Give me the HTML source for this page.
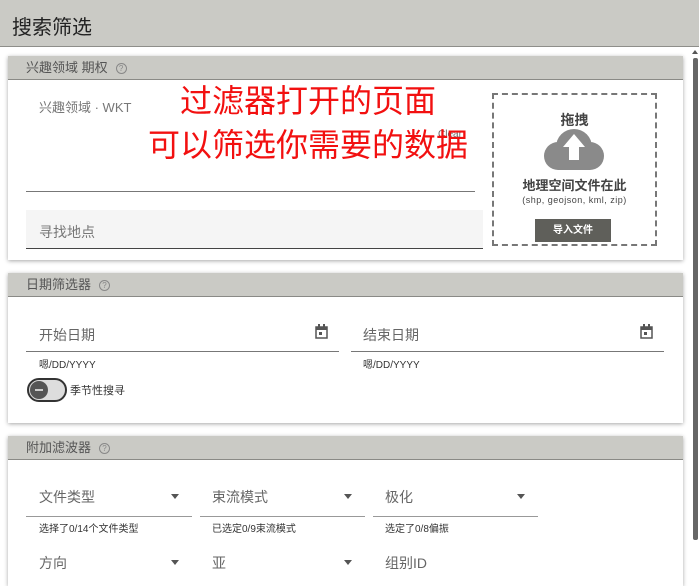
<!DOCTYPE html><html><head><meta charset="utf-8"><style>
body{margin:0;width:699px;height:578px;overflow:hidden;background:#fff;font-family:"Liberation Sans","Noto Sans CJK SC",sans-serif;position:relative}
.a{position:absolute}
.hd{background:#cacac5;border-bottom:1px solid #8e8e8a}
.card{position:absolute;left:8px;width:675px;background:#fff;box-shadow:0 1px 4px rgba(0,0,0,.35)}
.ch{height:23px;background:#cacac5;border-bottom:1px solid #8a8a86;font-size:13px;color:#555;line-height:23px;padding-left:18px}
.q{display:inline-block;width:9px;height:9px;border:1px solid #888;border-radius:50%;font-size:8px;line-height:9px;text-align:center;margin-left:8px;vertical-align:1px;color:#888}
.lbl{font-size:14px;color:#666}
.ln{height:1px;background:#777}
.sm{font-size:10px;color:#333}
.tri{width:0;height:0;border-left:4px solid transparent;border-right:4px solid transparent;border-top:5px solid #555}
.red{color:#f21010;font-size:32px;position:absolute}
</style></head><body>
<div class="a hd" style="left:0;top:0;width:699px;height:46px"></div>
<div class="a" style="left:12px;top:11px;font-size:20px;color:#222">搜索筛选</div>
<div class="a" style="left:693px;top:58px;width:5px;height:482px;background:#666;border-radius:2px"></div>
<div class="a" style="left:692px;top:50px;width:0;height:0;border-left:3px solid transparent;border-right:3px solid transparent;border-bottom:4px solid #555"></div>

<div class="card" style="top:56px;height:204px">
<div class="ch">兴趣领域 期权<span class="q">?</span></div>
<div class="a lbl" style="left:31px;top:41px;font-size:13px;color:#777">兴趣领域 · WKT</div>
<div class="a ln" style="left:18px;top:135px;width:449px"></div>
<div class="a" style="left:18px;top:154px;width:457px;height:38px;background:#f5f5f5;border-bottom:1px solid #444"></div>
<div class="a lbl" style="left:31px;top:166px;color:#777">寻找地点</div>
<div class="a" style="left:430px;top:73px;font-size:10px;color:#666">Clear</div>
<div class="a" style="left:484px;top:37px;width:161px;height:149px;border:2px dashed #777"></div>
<div class="a" style="left:484px;top:54px;width:165px;text-align:center;font-size:14px;font-weight:bold;color:#444">拖拽</div>
<svg class="a" style="left:535px;top:72px" width="62" height="44" viewBox="0 0 62 44"><g fill="#8a8a8a"><circle cx="31" cy="19" r="18"/><circle cx="15" cy="28" r="14"/><circle cx="47" cy="28" r="14"/><rect x="15" y="26" width="32" height="16"/></g><path d="M31 6 L20 19 H26 V32 H36 V19 H42 Z" fill="#fff"/></svg>
<div class="a" style="left:484px;top:119px;width:165px;text-align:center;font-size:13px;font-weight:bold;color:#444">地理空间文件在此</div>
<div class="a" style="left:484px;top:139px;width:165px;text-align:center;font-size:9px;color:#444;letter-spacing:.5px">(shp, geojson, kml, zip)</div>
<div class="a" style="left:527px;top:163px;width:76px;height:23px;background:#5f5f5a;color:#fff;font-size:10px;font-weight:bold;text-align:center;line-height:23px">导入文件</div>
</div>
<div class="red" style="left:180px;top:76px">过滤器打开的页面</div>
<div class="red" style="left:148px;top:120px">可以筛选你需要的数据</div>

<div class="card" style="top:273px;height:150px">
<div class="ch">日期筛选器<span class="q">?</span></div>
<div class="a lbl" style="left:31px;top:52px">开始日期</div>
<div class="a lbl" style="left:355px;top:52px">结束日期</div>
<svg class="a" style="left:307px;top:51px" width="13" height="15"><rect x="1" y="3" width="11" height="11" fill="none" stroke="#555" stroke-width="1.5"/><rect x="1" y="3" width="11" height="3" fill="#555"/><rect x="3" y="0" width="2" height="4" fill="#555"/><rect x="8" y="0" width="2" height="4" fill="#555"/><rect x="4" y="8" width="3" height="3" fill="#555"/></svg>
<svg class="a" style="left:632px;top:51px" width="13" height="15"><rect x="1" y="3" width="11" height="11" fill="none" stroke="#555" stroke-width="1.5"/><rect x="1" y="3" width="11" height="3" fill="#555"/><rect x="3" y="0" width="2" height="4" fill="#555"/><rect x="8" y="0" width="2" height="4" fill="#555"/><rect x="4" y="8" width="3" height="3" fill="#555"/></svg>
<div class="a ln" style="left:18px;top:78px;width:313px"></div>
<div class="a ln" style="left:343px;top:78px;width:313px"></div>
<div class="a sm" style="left:31px;top:83px">嗯/DD/YYYY</div>
<div class="a sm" style="left:355px;top:83px">嗯/DD/YYYY</div>
<div class="a" style="left:19px;top:105px;width:36px;height:20px;border:2px solid #333;border-radius:12px;background:#ddd"></div>
<div class="a" style="left:22px;top:108px;width:18px;height:18px;border-radius:50%;background:#555"></div>
<div class="a" style="left:27px;top:116px;width:8px;height:2px;background:#ccc"></div>
<div class="a" style="left:62px;top:109px;font-size:11px;color:#333">季节性搜寻</div>
</div>

<div class="card" style="top:436px;height:150px">
<div class="ch">附加滤波器<span class="q">?</span></div>
<div class="a lbl" style="left:31px;top:51px">文件类型</div>
<div class="a lbl" style="left:204px;top:51px">束流模式</div>
<div class="a lbl" style="left:377px;top:51px">极化</div>
<div class="a tri" style="left:163px;top:58px"></div>
<div class="a tri" style="left:336px;top:58px"></div>
<div class="a tri" style="left:509px;top:58px"></div>
<div class="a ln" style="left:18px;top:80px;width:166px;background:#999"></div>
<div class="a ln" style="left:192px;top:80px;width:165px;background:#999"></div>
<div class="a ln" style="left:365px;top:80px;width:165px;background:#999"></div>
<div class="a sm" style="left:31px;top:84px">选择了0/14个文件类型</div>
<div class="a sm" style="left:204px;top:84px">已选定0/9束流模式</div>
<div class="a sm" style="left:377px;top:84px">选定了0/8偏振</div>
<div class="a lbl" style="left:31px;top:117px">方向</div>
<div class="a lbl" style="left:204px;top:117px">亚</div>
<div class="a lbl" style="left:377px;top:117px">组别ID</div>
<div class="a tri" style="left:163px;top:124px"></div>
<div class="a tri" style="left:336px;top:124px"></div>
</div>
</body></html>
